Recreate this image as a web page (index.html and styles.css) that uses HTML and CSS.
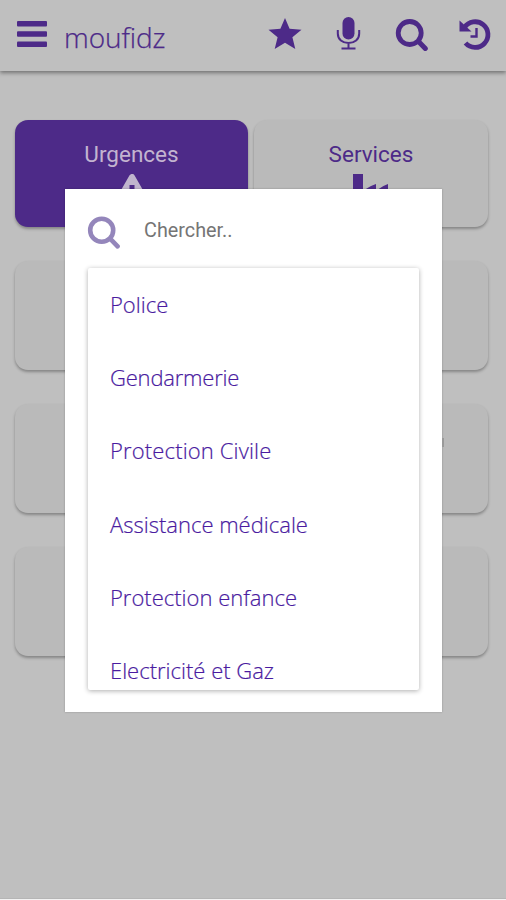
FILE: index.html
```html
<!DOCTYPE html>
<html lang="fr">
<head>
<meta charset="utf-8">
<title>moufidz</title>
<link rel="stylesheet" href="styles.css">
</head>
<body>
<div class="app">
  <header class="bar">
    <svg class="menu" width="30" height="26" viewBox="0 0 30 26"><rect width="30" height="5.500" rx="1"/><rect y="10.200" width="30" height="5.500" rx="1"/><rect y="20.400" width="30" height="5.500" rx="1"/></svg>
    <h1 class="brand">moufidz</h1>
    <nav class="actions">
      <svg width="34" height="34" viewBox="0 0 34 34"><path d="M17 1l4.600 10.700 11.900 1-9.100 7.600L27.300 32 17 25.800 6.700 32l2.900-11.700L.5 12.700l11.900-1z"/></svg>
      <svg width="34" height="34" viewBox="0 0 34 34"><rect x="11.500" y="0" width="12" height="22.500" rx="6"/><path class="mic-line" d="M6.800 13v3.500c0 6 4.700 9.500 10.700 9.500s10.700-3.500 10.700-9.500V13M17.500 26v5.500M10.500 31.500h14"/></svg>
      <svg width="34" height="34" viewBox="0 0 34 34"><circle class="ring" cx="14.700" cy="16" r="11.500"/><path class="handle" d="M24 25l6.300 6.500"/></svg>
      <svg width="34" height="34" viewBox="0 0 34 34"><path class="ring" d="M6.500 10.500A12.800 12.800 0 1 1 7.500 26"/><path d="M1.500 3.500v11h12z"/><path class="hand" d="M18.500 11v8.500h-6"/></svg>
    </nav>
  </header>
  <main class="tiles">
    <section class="tile active">
      <h2>Urgences</h2>
      <svg width="38" height="34" viewBox="0 0 38 34"><path class="warn" d="M19 3L3 31h32z"/><path class="warn-fill" d="M19 3L3 31h32z"/><path class="warn-mark" d="M19 11v11M19 25v3"/></svg>
    </section>
    <section class="tile">
      <h2>Services</h2>
      <svg width="36" height="34" viewBox="0 0 36 34"><path d="M0 0h10v20q1-6 13-10v10q1-6 12-10v24H0z"/></svg>
    </section>
    <section class="tile wide"></section>
    <section class="tile wide"></section>
    <section class="tile wide"></section>
  </main>
  <div class="dialog">
    <div class="search">
      <svg width="34" height="34" viewBox="0 0 34 34"><circle class="ring" cx="14.700" cy="15.300" r="11.500"/><path class="handle" d="M23.800 24.300l6.800 7"/></svg>
      <span class="hint">Chercher..</span>
    </div>
    <ul class="list">
      <li>Police</li>
      <li class="tight">Gendarmerie</li>
      <li class="loose">Protection Civile</li>
      <li>Assistance médicale</li>
      <li>Protection enfance</li>
      <li>Electricité et Gaz</li>
    </ul>
  </div>
  <span class="peek"></span>
</div>
</body>
</html>
```
FILE: styles.css
```css
* { box-sizing: border-box; }
body { margin: 0; background: #f2f2f2; }
.app {
  position: relative;
  height: 899px;
  overflow: hidden;
  background: #bfbfbf;
  border-bottom: 1px solid #b5b5b5;
  color: #4d2a88;
  font-family: Roboto, sans-serif;
}
svg { display: block; fill: #4d2a88; }
.bar {
  height: 71px;
  display: flex;
  align-items: flex-start;
  padding: 0 14px 0 17px;
  box-shadow: 0 2px 4px rgba(0, 0, 0, .4);
}
.menu { margin-top: 21px; }
.brand {
  margin: 17px 0 0 17px;
  font: 300 28px/40px "Open Sans", sans-serif;
  letter-spacing: -.1px;
  -webkit-text-stroke: .25px #4d2a88;
}
.actions {
  margin: 17px 0 0 auto;
  display: flex;
  gap: 29.300px;
}
.ring { fill: none; stroke: #4d2a88; stroke-width: 4.800; }
.handle { fill: none; stroke: #4d2a88; stroke-width: 5; stroke-linecap: round; }
.hand { fill: none; stroke: #4d2a88; stroke-width: 2.400; }
.mic-line { fill: none; stroke: #4d2a88; stroke-width: 2; }
.tiles {
  display: grid;
  grid-template-columns: 233px 234px;
  grid-template-rows: 107px 109px 109px 109px;
  gap: 34px 6px;
  padding: 49px 0 0 15px;
}
.tile {
  display: flex;
  flex-direction: column;
  align-items: center;
  padding-top: 21px;
  border-radius: 13px;
  background: #bababa;
  box-shadow: 0 2px 3px rgba(0, 0, 0, .3);
}
.tile h2 {
  margin: 0 0 7px;
  font-size: 22.500px;
  font-weight: 400;
  line-height: 26px;
}
.wide { grid-column: span 2; }
.active { background: #4d2a88; color: #c3b4d0; }
.warn { fill: none; stroke: #c0b5cd; stroke-width: 6; stroke-linejoin: round; }
.warn-fill { fill: #c0b5cd; }
.warn-mark { stroke: #4d2a88; stroke-width: 5; }
.dialog {
  position: absolute;
  left: 65px;
  top: 189px;
  width: 377px;
  height: 523px;
  padding: 26px 22px 22px;
  background: #fff;
  box-shadow: 0 0 2px rgba(0, 0, 0, .25);
}
.search { display: flex; align-items: flex-start; height: 53px; }
.search .ring, .search .handle { stroke: #9486bb; stroke-width: 4.600; }
.hint { margin: 3px 0 0 23px; font-size: 19.800px; line-height: 26px; color: #757575; }
.list {
  margin: 0 0 0 1px;
  padding: 0;
  height: 422px;
  width: 331px;
  overflow: hidden;
  list-style: none;
  border-radius: 2px;
  box-shadow: 0 1px 5px rgba(0, 0, 0, .32);
}
.list li {
  height: 73.200px;
  padding-left: 22px;
  font: 300 22px/72px "Open Sans", sans-serif;
  color: #4a1ba0;
  -webkit-text-stroke: .2px #4a1ba0;
}
.list .tight { letter-spacing: -.2px; }
.list .loose { letter-spacing: .15px; }
.peek {
  position: absolute;
  left: 442px;
  top: 438px;
  width: 2px;
  height: 9px;
  background: #999;
}
```
